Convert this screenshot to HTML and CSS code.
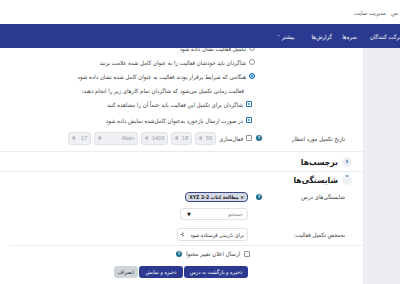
FILE: index.html
```
<!DOCTYPE html>
<html lang="fa" dir="rtl">
<head>
<meta charset="utf-8">
<link rel="stylesheet" href="styles.css">
</head>
<body>
<div class="page">
  <div class="topbar">
    <div class="toplinks"><span>درس‌های من</span><span>مدیریت سایت</span></div>
    <span class="topcut">ا</span>
  </div>
  <nav class="navbar">
    <span class="n1">شرکت کنندگان</span>
    <span class="n2">نمره‌ها</span>
    <span class="n3">گزارش‌ها</span>
    <span>بیشتر <small class="caret">˅</small></span>
  </nav>
  <div class="body">
    <aside class="side"></aside>
    <main class="main">
      <div class="opts">
        <div class="opt opt-radio cut"><span class="radio"></span><span>تکمیل فعالیت نشان داده شود</span></div>
        <div class="opt opt-radio"><span class="radio"></span><span>شاگردان باید خودشان فعالیت را به عنوان کامل شده علامت بزنند</span></div>
        <div class="opt opt-radio"><span class="radio on"></span><span>هنگامی که شرایط برقرار بودند فعالیت به عنوان کامل شده نشان داده شود</span></div>
        <div class="opt opt-text"><span>فعالیت زمانی تکمیل می‌شود که شاگردان تمام کارهای زیر را انجام دهند:</span></div>
        <div class="opt opt-check"><span class="check on"></span><span>شاگردان برای تکمیل این فعالیت باید حتماً آن را مشاهده کنند</span></div>
        <div class="opt opt-check gap"><span class="check on"></span><span>در صورت ارسال بازخورد به‌عنوان کامل‌شده نمایش داده شود</span></div>
      </div>

      <div class="row row-date">
        <div class="label">تاریخ تکمیل مورد انتظار</div>
        <div class="help">?</div>
        <div class="control dates">
          <span class="check"></span><span class="cbtext">فعال‌سازی</span>
          <span class="sel dis w21">56<i class="arr"></i></span>
          <span class="sel dis w21">18<i class="arr"></i></span>
          <span class="sel dis w27">1403<i class="arr"></i></span>
          <span class="sel dis w44">Aban<i class="arr"></i></span>
          <span class="sel dis w23">17<i class="arr"></i></span>
        </div>
      </div>

      <div class="section first"><span class="chev">‹</span><h2>برچسب‌ها</h2></div>
      <div class="section open"><span class="chev">˅</span><h2>شایستگی‌ها</h2></div>

      <div class="row row-comp">
        <div class="label">شایستگی‌های درس</div>
        <div class="help">?</div>
        <div class="control stack">
          <span class="tag">× مطالعهٔ کتاب XYZ 2-2</span>
          <span class="search"><span class="ph">جستجو</span><span class="tri">▼</span></span>
        </div>
      </div>

      <div class="row row-done">
        <div class="label">به‌محض تکمیل فعالیت:</div>
        <div class="help blank"></div>
        <div class="control">
          <span class="sel wide">برای بازبینی فرستاده شود<i class="arr"></i></span>
        </div>
      </div>

      <div class="notify">
        <span class="check"></span><span>ارسال اعلان تغییر محتوا</span><span class="help">?</span>
      </div>

      <div class="buttons">
        <button class="btn primary b1">ذخیره و بازگشت به درس</button>
        <button class="btn primary b2">ذخیره و نمایش</button>
        <button class="btn secondary b3">انصراف</button>
      </div>
    </main>
  </div>
</div>
</body>
</html>
```
FILE: styles.css
```
* { box-sizing: border-box; }
html, body { margin: 0; padding: 0; }
body {
  width: 400px; height: 284px; overflow: hidden; background: #fff;
  font-family: "DejaVu Sans Condensed", "DejaVu Sans", sans-serif; font-size: 6px; color: #3a3f44;
}
.page { width: 400px; height: 284px; overflow: hidden; }

.topbar {
  height: 24px; display: flex; align-items: center; justify-content: space-between;
  background: #fff; color: #555;
}
.toplinks { display: flex; gap: 5px; margin-right: -20px; }
.topcut { margin-left: -3px; }

.navbar {
  height: 24px; background: #2b3990; color: #fff;
  display: flex; align-items: center; margin-right: -4px;
}
.n1 { margin-left: 13px; }
.n2 { margin-left: 10px; }
.n3 { margin-left: 17px; }
.caret { font-size: 5px; }

.body { display: flex; height: 236px; }
.main { width: 363px; flex: none; overflow: hidden; background: #fff; }
.side { flex: 1; background: #eceef3; }

.opts { margin-top: -7px; padding-right: 111px; }
.opt { display: flex; align-items: center; gap: 3px; height: 14px; white-space: nowrap; }
.opt-radio { margin-right: -3px; }
.opt-text { padding-right: 8px; }
.opt.gap { margin-top: 2px; }

.radio { width: 6px; height: 6px; border-radius: 50%; border: 1px solid #8f959e; background: #fff; flex: none; }
.radio.on { border-color: #0f6cbf; background: #0f6cbf; box-shadow: inset 0 0 0 1px #fff; }
.check { width: 6px; height: 6px; border: 1px solid #8f959e; border-radius: 1px; background: #fff; flex: none; }
.check.on { background: #0f6cbf; border-color: #0f6cbf; box-shadow: inset 0 0 0 1.2px #fff; }

.row { display: grid; grid-template-columns: 80px 12px auto; align-items: center; padding-right: 18px; white-space: nowrap; }
.label { color: #3a3f44; }
.help {
  width: 6px; height: 6px; border-radius: 50%; background: #176d8a; color: #fff;
  font-size: 4.5px; font-weight: bold; line-height: 6px; text-align: center; justify-self: center;
  font-family: "DejaVu Sans", sans-serif;
}
.help.blank { background: none; }
.control { display: flex; align-items: center; gap: 3px; margin-right: 3px; }

.row-date { margin-top: 4px; height: 14px; }
.row-date .control { margin-right: 1px; }
.sel {
  height: 13px; border: 1px solid #dee2e6; border-radius: 3px; display: flex; align-items: center;
  justify-content: space-between; padding: 0 3px; font-family: "Liberation Sans", sans-serif;
  font-size: 5.5px; background: #fff; color: #333; white-space: nowrap;
}
.sel.dis { background: #eef0f3; color: #9aa0a6; }
.w21 { width: 21px; } .w23 { width: 23px; } .w27 { width: 27px; } .w44 { width: 44px; }
.arr {
  width: 3px; height: 5px; display: inline-block; background: #555;
  clip-path: polygon(50% 0, 100% 40%, 0 40%, 0 60%, 100% 60%, 50% 100%);
}
.sel.dis .arr { background: #888; }

.section {
  display: flex; align-items: center; gap: 4px; padding-right: 11px; height: 20px;
  border-top: 1px solid #e9ecef;
}
.section.first { margin-top: 6px; }
.section.open { height: 16px; }
.section h2 {
  margin: 0; font-size: 8.5px; font-weight: bold; color: #1d2125;
  font-family: "DejaVu Sans Condensed", "DejaVu Sans", sans-serif;
}
.chev {
  width: 10px; height: 10px; border-radius: 50%; background: #eef0f4; color: #0f6cbf;
  font-size: 8px; line-height: 9px; text-align: center; font-weight: bold; font-family: "DejaVu Sans", sans-serif;
}

.row-comp { align-items: start; margin-top: 5px; }
.row-comp .label { margin-top: 1px; }
.row-comp .help { margin-top: 1.5px; }
.stack { flex-direction: column; align-items: flex-start; gap: 6px; margin-right: 5px; }
.tag {
  height: 10px; padding: 0 3px; border: 1px solid #3a4780; border-radius: 4px; background: #d6d9e6;
  font-size: 5px; font-weight: bold; line-height: 8px; color: #1d2125;
}
.search {
  width: 68px; height: 12px; border: 1px solid #dee2e6; border-radius: 3px; display: flex;
  justify-content: space-between; align-items: center; padding: 0 4px 0 6px;
}
.ph { color: #888; font-size: 5.5px; }
.tri { font-size: 5px; color: #222; font-family: "DejaVu Sans", sans-serif; }

.row-done { margin-top: 8px; height: 12px; }
.row-done .control { margin-right: 5px; }
.sel.wide { width: 71px; gap: 4px; font-family: "DejaVu Sans Condensed", "DejaVu Sans", sans-serif; }

.notify {
  margin: 5px 0 0 10px; border-top: 1px solid #e9ecef; padding: 0 113px 0 0; height: 16px;
  display: flex; align-items: center; gap: 4px; white-space: nowrap;
}

.buttons { display: flex; gap: 1px; padding-right: 115px; margin-top: 5px; }
.btn {
  height: 12px; border: 0; border-radius: 3px; padding: 0; white-space: nowrap; text-align: center;
  font-family: "DejaVu Sans Condensed", "DejaVu Sans", sans-serif; font-size: 5.5px; line-height: 12px;
}
.b1 { width: 64px; } .b2 { width: 44px; } .b3 { width: 24px; }
.primary { background: #2b3990; color: #fff; }
.secondary { background: #ced4da; color: #333; }
```
